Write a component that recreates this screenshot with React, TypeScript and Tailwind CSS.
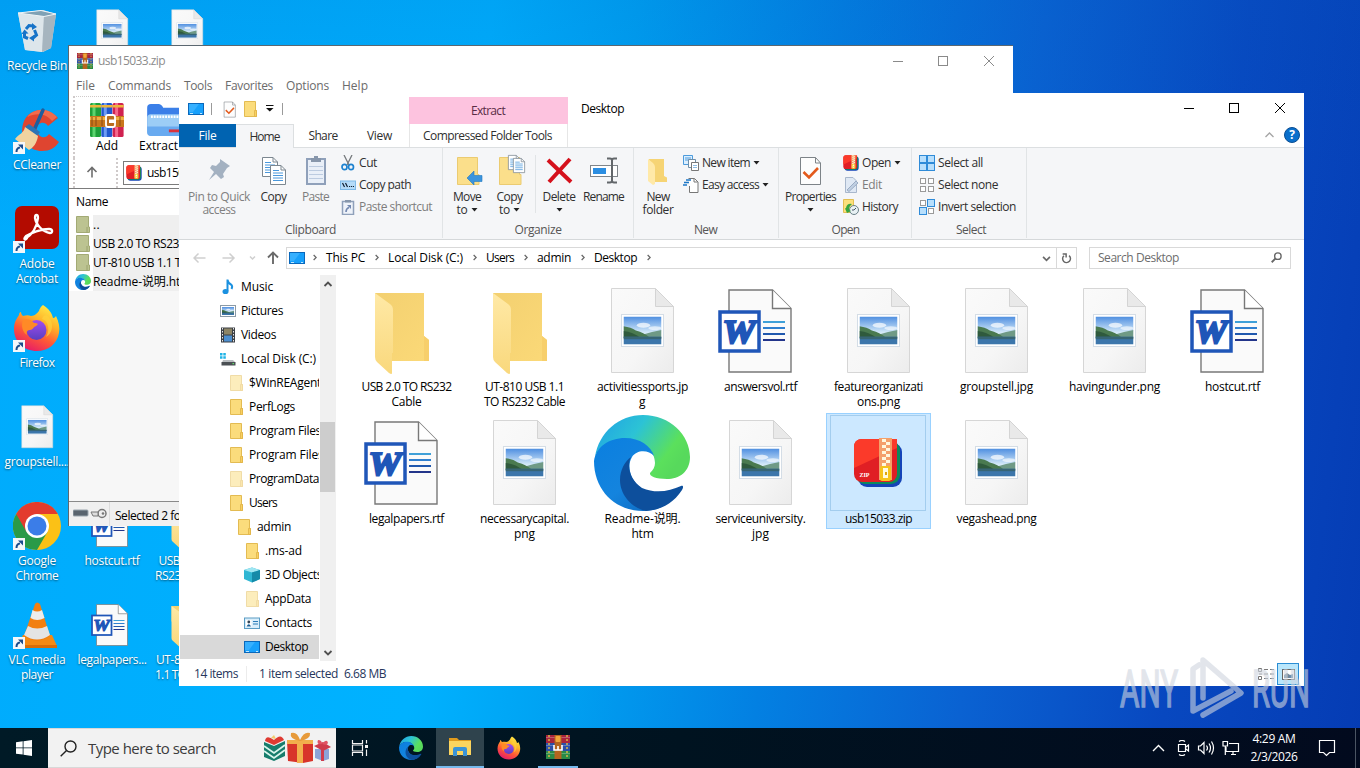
import { useLayoutEffect, useRef, useId, type ReactNode } from "react";

/* Single line of text tracked so that it takes up the given width. */
function T({ w, children, className = "" }: { w: number; children: string; className?: string }) {
  const ref = useRef<HTMLSpanElement>(null);
  useLayoutEffect(() => {
    const el = ref.current;
    if (!el) return;
    el.style.letterSpacing = "0px";
    const natural = el.getBoundingClientRect().width;
    el.style.letterSpacing = `${(w - natural) / children.length}px`;
  }, [w, children]);
  return (
    <span ref={ref} className={`inline-block whitespace-pre ${className}`}>
      {children}
    </span>
  );
}

type Line = [string, number];
type IconProps = { className?: string };

/* ---------- file icons ---------- */

function Landscape({ x, y, w, h }: { x: number; y: number; w: number; h: number }) {
  const id = useId();
  return (
    <svg x={x} y={y} width={w} height={h} viewBox="0 0 40 29" preserveAspectRatio="none">
      <defs>
        <linearGradient id={id} x1="0" y1="0" x2="0" y2="1">
          <stop offset="0" stopColor="#4e8ee0" />
          <stop offset="0.55" stopColor="#cfe6f8" />
          <stop offset="0.7" stopColor="#e6f3fb" />
        </linearGradient>
      </defs>
      <rect width="40" height="29" fill={`url(#${id})`} />
      <ellipse cx="21" cy="9" rx="7" ry="2.6" fill="#fff" opacity=".7" />
      <ellipse cx="33" cy="12" rx="7" ry="2" fill="#fff" opacity=".6" />
      <path d="M16 20 L30 16 L40 14 V22 H14Z" fill="#6f9a86" />
      <path d="M0 10 Q8 11 13 14.500 Q22 17 28 22 H0Z" fill="#4a7a50" />
      <path d="M0 15 Q10 16 18 22 H0Z" fill="#2f5a3d" />
      <rect y="21" width="40" height="8" fill="#3c76ab" />
      <rect y="21" width="40" height="2.500" fill="#376575" />
    </svg>
  );
}

function ImageDoc({ className = "" }: IconProps) {
  const id = useId();
  return (
    <svg viewBox="0 0 96 96" className={className}>
      <defs>
        <linearGradient id={id} x1="0" y1="0" x2="1" y2="1">
          <stop offset="0" stopColor="#fafafa" />
          <stop offset="0.6" stopColor="#f6f6f6" />
          <stop offset="1" stopColor="#ececec" />
        </linearGradient>
      </defs>
      <path d="M17.500 5.500 H61 L79.500 23.500 V89.500 H17.500Z" fill={`url(#${id})`} stroke="#d6d6d6" />
      <path d="M61.500 5.500 V23.500 H79.500Z" fill="#e9e9e9" stroke="#d4d4d4" />
      <rect x="27.500" y="31.500" width="42" height="32" fill="#fff" stroke="#d4dde6" />
      <Landscape x={29.500} y={33.500} w={38} h={28} />
    </svg>
  );
}

function WordDoc({ className = "" }: IconProps) {
  return (
    <svg viewBox="0 0 96 96" className={className}>
      <path d="M17 7 H60.500 L79 25.500 V89 H17Z" fill="#fafafa" stroke="#787878" strokeWidth="1.400" />
      <path d="M60.500 7 V25.500 H79" fill="#fff" stroke="#787878" strokeWidth="1.400" />
      <g strokeWidth="2">
        <path d="M51 39 H73" stroke="#3fa0d8" />
        <path d="M51 45 H73" stroke="#2f80d0" />
        <path d="M51 51 H73" stroke="#2058ae" />
        <path d="M51 57 H73" stroke="#23358a" />
      </g>
      <rect x="8" y="29" width="39" height="39" fill="#fff" stroke="#1f56b8" strokeWidth="3.500" />
      <text x="27" y="60" textAnchor="middle" textLength="33" lengthAdjust="spacingAndGlyphs" fontFamily="Liberation Serif, serif" fontWeight="bold" fontStyle="italic" fontSize="34" fill="#1f56b8" stroke="#1f56b8" strokeWidth="2.200">
        W
      </text>
    </svg>
  );
}

function BigFolder({ className = "" }: IconProps) {
  const id = useId();
  return (
    <svg viewBox="0 0 96 96" className={className}>
      <defs>
        <linearGradient id={id} x1="0" y1="0" x2="1" y2="1">
          <stop offset="0" stopColor="#f3d070" />
          <stop offset="1" stopColor="#fbd978" />
        </linearGradient>
        <linearGradient id={id + "b"} x1="0" y1="0" x2="0" y2="1">
          <stop offset="0" stopColor="#ffe9a6" />
          <stop offset="1" stopColor="#f9d87c" />
        </linearGradient>
      </defs>
      <path d="M17 10 H66 V53 L71 57 V78 H34 L17 40Z" fill={`url(#${id})`} />
      <path d="M66 53 L71 57 V78 H66Z" fill="#f7cf6b" />
      <path d="M17 10 L32 21 Q35 23 35 27 V70 H34 V90 Q34 92 31 90 L19 79 Q17 77 17 74Z" fill={`url(#${id}b)`} />
    </svg>
  );
}

function Edge({ className = "" }: IconProps) {
  const id = useId();
  return (
    <svg viewBox="0 0 96 96" className={className}>
      <defs>
        <linearGradient id={id + "a"} x1="0" y1="0" x2="1" y2=".5">
          <stop offset="0" stopColor="#1f9fe6" />
          <stop offset=".45" stopColor="#2cc3d5" />
          <stop offset=".85" stopColor="#5be05c" />
          <stop offset="1" stopColor="#57d95c" />
        </linearGradient>
        <linearGradient id={id + "b"} x1="0" y1="0" x2="1" y2="1">
          <stop offset="0" stopColor="#0a7fe0" />
          <stop offset=".5" stopColor="#1484de" />
          <stop offset="1" stopColor="#0b5fb4" />
        </linearGradient>
      </defs>
      <path d="M1 42 C5 17 25 0 49 0 C76 0 96 20 96 42 C96 57 85 64 73 64 C62 64 55 61 56 58 C59 55 61 52 61 48 C61 36 49 24 31 24 C16 24 5 32 1 42Z" fill={`url(#${id}a)`} />
      <path d="M0 46 C2 32 15 23 31 23 C46 23 57 31 60 41 C55 35 43 34 38 42 C32 52 37 68 50 75 C64 81 78 78 88 72 C80 87 66 96 49 96 C22 96 0 76 0 46Z" fill={`url(#${id}b)`} />
      <path d="M37 42 C32 52 37 66 48 73 C62 79 76 76 87 71 C89 70 90 72 88 75 C79 89 66 95 52 96 C38 93 26 80 26 65 C26 55 31 46 37 42Z" fill="#0d4f9c" />
    </svg>
  );
}

function ZipFile({ className = "", label = true }: IconProps & { label?: boolean }) {
  return (
    <svg viewBox="0 0 50 50" className={className}>
      <rect x="5" y="5" width="44" height="44" rx="9" fill="#1544b8" />
      <rect x="3" y="3" width="44" height="43" rx="9" fill="#0d8a5c" />
      <rect x="1" y="1" width="43" height="43" rx="8" fill="#e01f24" />
      <path d="M9 1 H44 V10 L1 30 V9 Q1 1 9 1Z" fill="#fb3a2a" />
      <rect x="26" y="0" width="13" height="42" fill="#f4a06a" />
      <path d="M29 1h4v3h-4z M33 4h4v3h-4z M29 7h4v3h-4z M33 10h4v3h-4z M29 13h4v3h-4z M33 16h4v3h-4z M29 19h4v3h-4z M33 22h4v3h-4z M29 25h4v3h-4z" fill="#fff8dc" />
      <rect x="27" y="28" width="11" height="15" rx="2" fill="#f6c31c" />
      <path d="M30 30h5v10h-5z" fill="#fffbe2" />
      <path d="M32 34h2v3h-2z" fill="#e0a710" />
      {label && (
        <text x="6.500" y="38.500" fontFamily="Liberation Serif, serif" fontWeight="bold" fontSize="6" fill="#fff">
          ZIP
        </text>
      )}
    </svg>
  );
}

/* ---------- application icons ---------- */

function Books({ className = "" }: IconProps) {
  const cols = [
    ["#1f9f3a", "#5cd46e"],
    ["#2158cf", "#6d9cf4"],
    ["#d02250", "#f4688c"],
  ];
  return (
    <svg viewBox="0 0 34 34" className={className}>
      {cols.map(([a, b], i) => (
        <g key={a}>
          <rect x={i * 11.300} y="0" width="11" height="34" rx="1.500" fill={a} />
          <rect x={i * 11.300 + 2.500} y="0" width="3" height="34" fill={b} />
          <rect x={i * 11.300} y="2" width="11" height="2.500" fill="#edb53b" />
        </g>
      ))}
      <rect x="0" y="13" width="34" height="11" fill="#c9761c" />
      <rect x="0" y="14" width="34" height="3" fill="#f0b043" />
      <path d="M2 14v9 M6 14v9 M12 14v9 M30 14v9" stroke="#8a4a12" />
      <rect x="16" y="12" width="9" height="12" rx="2" fill="#b96d1f" stroke="#fff" strokeWidth="1.800" />
      <rect x="19" y="16.500" width="7" height="3.500" fill="#fff" />
    </svg>
  );
}

function WinRar({ className = "" }: IconProps) {
  return (
    <svg viewBox="0 0 24 24" className={className}>
      <rect width="24" height="8" fill="#a8243c" />
      <rect y="8" width="24" height="8" fill="#2c4fa8" />
      <rect y="16" width="24" height="8" fill="#2a8a46" />
      <path d="M0 2.500H24 M0 10.500H24 M0 18.500H24" stroke="#fff" strokeOpacity=".25" strokeWidth="1.200" />
      <path d="M3 0V24 M21 0V24" stroke="#d9b545" strokeWidth="1.500" strokeDasharray="2 2" />
      <rect x="8.500" y="0" width="7" height="24" fill="#b4641e" />
      <rect x="9.500" y="1" width="5" height="6" rx="1" fill="#f2a43a" />
      <path d="M8 10V15H16V10 M12 11V15" fill="none" stroke="#fff" strokeWidth="1.600" />
    </svg>
  );
}

function Firefox({ className = "" }: IconProps) {
  const id = useId();
  return (
    <svg viewBox="0 0 48 48" className={className}>
      <defs>
        <linearGradient id={id} x1=".8" y1="0" x2=".3" y2="1">
          <stop offset="0" stopColor="#fff04a" />
          <stop offset=".35" stopColor="#ffb429" />
          <stop offset=".65" stopColor="#ff5b35" />
          <stop offset="1" stopColor="#e5196a" />
        </linearGradient>
        <linearGradient id={id + "p"} x1="0" y1="0" x2="0" y2="1">
          <stop offset="0" stopColor="#a34cf0" />
          <stop offset="1" stopColor="#5a3fc0" />
        </linearGradient>
      </defs>
      <path d="M30 1 C36 5 39 9 40 14 C42 14 43 12 43 12 C46 18 47 24 46 29 C44 40 35 47 24 47 C11 47 1 38 1 25 C1 18 4 14 6 11 C6 9 7 8 8 8 C8 10 9 11 10 12 C13 11 16 11 18 12 C22 12 24 9 26 7 C27 3 30 1 30 1Z" fill={`url(#${id})`} />
      <circle cx="23.500" cy="26" r="10" fill={`url(#${id}p)`} />
      <path d="M10 16 C14 14 19 16 21 19 C25 19 26 20 23 22 C20 23 20 26 17 26 C15 26 13 27 14 31 C9 28 8 21 10 16Z" fill="#ff8a26" />
      <path d="M29 15 C36 17 37 27 33 33 C39 30 41 21 37 15 C35 11 31 9 29 15Z" fill="#ffd23c" opacity=".7" />
    </svg>
  );
}

function Chrome({ className = "" }: IconProps) {
  return (
    <svg viewBox="0 0 48 48" className={className}>
      <circle cx="24" cy="24" r="24" fill="#fbc116" />
      <path d="M24 24 L3.200 12 A24 24 0 0 0 24 48 L34.400 30Z" fill="#2a9a48" />
      <path d="M3.200 12 A24 24 0 0 1 44.800 12 H24 L13.600 30Z" fill="#e33b2e" />
      <circle cx="24" cy="24" r="12" fill="#fff" />
      <circle cx="24" cy="24" r="9.500" fill="#3b7de8" />
    </svg>
  );
}

function Vlc({ className = "" }: IconProps) {
  return (
    <svg viewBox="0 0 48 48" className={className}>
      <path d="M10 34 H39 L44 45 Q44 47 42 47 H7 Q5 47 5 45Z" fill="#f48a14" />
      <path d="M5 44h39v3h-39z" fill="#d96d08" />
      <path d="M22 3 Q24 0 27 3 L37 35 Q24 44 11 35Z" fill="#f27f10" />
      <path d="M19.500 9 Q24 12 29 9 L31.500 17 Q24 21 17.500 17Z" fill="#ededed" />
      <path d="M15 25 Q24 30 34 25 L37 34 Q24 43 11 34Z" fill="#e4e4e4" />
    </svg>
  );
}

function Acrobat({ className = "" }: IconProps) {
  return (
    <svg viewBox="0 0 48 48" className={className}>
      <rect x="2" y="1" width="44" height="43" rx="7" fill="#b30b00" />
      <path d="M13 33 C19 30 24 22 25 13 C25 9 22 9 22 13 C23 20 30 27 37 28 C40 28 40 24 36 24 C28 24 18 28 13 31 C10 34 12 36 14 33Z" fill="none" stroke="#fff" strokeWidth="2.300" strokeLinejoin="round" />
    </svg>
  );
}

function CCleaner({ className = "" }: IconProps) {
  return (
    <svg viewBox="0 0 48 48" className={className}>
      <path d="M45 12 C34 -1 16 3 11 15 C5 30 14 45 29 45 C37 45 42 42 46 36 L36 28 C32 34 25 31 24 25 C23 17 31 14 35 20Z" fill="#df4530" />
      <path d="M44 11 C34 0 20 3 14 11 C24 6 34 8 39 15Z" fill="#f26b4c" />
      <path d="M30 4 L22 22" stroke="#1d5e9e" strokeWidth="3.500" strokeLinecap="round" />
      <path d="M16 18 L27 26 L24 30 L12 21Z" fill="#2d74b5" />
      <path d="M12 21 L25 30 C24 37 20 42 16 44 L2 33 C6 28 11 27 12 21Z" fill="#f0d3a0" />
    </svg>
  );
}

function RecycleBin({ className = "" }: IconProps) {
  return (
    <svg viewBox="0 0 48 48" className={className}>
      <path d="M5 6 L30 3 L43 7 L38 41 L30 45 L12 43Z" fill="#cdd9e0" />
      <path d="M5 6 L31 9 L29 45 L12 43Z" fill="#dde6eb" />
      <path d="M31 9 L43 7 L38 41 L29 45Z" fill="#a6b5bf" />
      <path d="M5 6 L28 3.500 L43 7 L31 9.500Z" fill="#7fa1b5" stroke="#eef4f7" />
      <g fill="none" stroke="#1673c8" strokeWidth="3">
        <path d="M13 22 L16 18.500 L20 19" />
        <path d="M21.500 23 L23.500 28 L20 31" />
        <path d="M15 31.500 L11.500 30 L11.500 25.500" />
      </g>
      <path d="M19 16l5 4-5 3z M21 28v6.500l-5-3.500z M8.500 27l3-4.500 4 4z" fill="#1673c8" />
    </svg>
  );
}

function ShortcutBadge() {
  return (
    <svg viewBox="0 0 12 12" className="absolute bottom-0 left-0 size-3">
      <rect width="12" height="12" fill="#f4f7fa" />
      <path d="M3.500 10 Q3.500 6 7 5.500" fill="none" stroke="#1c4d8c" strokeWidth="2" />
      <path d="M5 2.500h5v5z" fill="#1c4d8c" />
    </svg>
  );
}

/* ---------- small icons ---------- */

function Folder16({ pale = false, className = "" }: IconProps & { pale?: boolean }) {
  return (
    <svg viewBox="-1 0 16 16" className={`size-4 shrink-0 ${pale ? "opacity-50" : ""} ${className}`}>
      <path d="M1.500 .500H12.500V9.500H13.500V15.500H1.500Z" fill="#fbdc7c" stroke="#e3bb52" />
      <path d="M11.500 9.500h2v6h-2z" fill="#f8d060" stroke="#dfb347" strokeWidth=".8" />
    </svg>
  );
}

function Monitor({ className = "" }: IconProps) {
  return (
    <svg viewBox="0 0 16 12" className={`shrink-0 ${className}`}>
      <rect x=".5" y=".5" width="15" height="11" fill="#17a0fb" stroke="#0a68bb" />
      <path d="M1 1H11L5 9H1Z" fill="#36b0ff" />
      <path d="M2 10.500H5 M12 10.500H14" stroke="#bfe6ff" />
    </svg>
  );
}

function Tri() {
  return (
    <svg viewBox="0 0 7 4" className="h-[4px] w-[7px] shrink-0">
      <path d="M.5 0H6.500L3.500 3.500Z" fill="#222" />
    </svg>
  );
}

function PinIcon() {
  return (
    <svg viewBox="0 0 32 32" className="size-8">
      <path d="M17 4 L27 11 L24 13 L20 19 L21 22 L18 24 L13 19 L6 25 L11 17 L7 13 L9 10 L13 11 L17 7Z" transform="translate(0 1)" fill="#a3b1c1" />
    </svg>
  );
}

function Sheet({ x, y, s = 1 }: { x: number; y: number; s?: number }) {
  return (
    <g transform={`translate(${x} ${y}) scale(${s})`}>
      <path d="M.5 .5H11L15.500 5V19.500H.5Z" fill="#fff" stroke="#7c8790" />
      <path d="M11 .5V5H15.500" fill="none" stroke="#7c8790" />
      <path d="M3 5.500h6M3 8h10M3 10.500h10M3 13h10M3 15.500h10" stroke="#4a98dc" />
    </g>
  );
}

function CopyIcon() {
  return (
    <svg viewBox="0 0 32 32" className="size-8">
      <Sheet x={4} y={3} />
      <Sheet x={12} y={11} />
    </svg>
  );
}

function PasteIcon({ className = "size-8" }: IconProps) {
  return (
    <svg viewBox="0 0 32 32" className={className}>
      <rect x="7" y="5" width="18" height="25" fill="#e9eff8" stroke="#8fa0ba" strokeWidth="2" />
      <path d="M11 4h10v4h-10z M14 2h4v3h-4z" fill="#8796ab" />
      <path d="M9 12.500h14M9 16.500h14M9 20.500h14M9 24.500h14" stroke="#bccbe0" />
    </svg>
  );
}

function CutIcon() {
  return (
    <svg viewBox="0 0 16 16" className="size-4">
      <path d="M4 0 L9 10 M12 0 L7 10" stroke="#75797d" strokeWidth="1.300" />
      <ellipse cx="4.500" cy="12" rx="2.500" ry="2.700" fill="none" stroke="#1e82cf" strokeWidth="1.700" />
      <ellipse cx="11" cy="12" rx="2.500" ry="2.700" fill="none" stroke="#1e82cf" strokeWidth="1.700" />
    </svg>
  );
}

function CopyPathIcon() {
  return (
    <svg viewBox="0 0 16 16" className="size-4">
      <rect x=".5" y="4" width="15" height="8.500" fill="#b5dbf8" stroke="#7ebae8" />
      <path d="M2.500 6l2 4M5.500 6l2 4M9 9.500h1.200M11 9.500h1.200M13 9.500h1" stroke="#123" strokeWidth="1.200" />
    </svg>
  );
}

function PasteShortcutIcon() {
  return (
    <svg viewBox="0 0 16 16" className="size-4">
      <rect x="2.500" y="2.500" width="11" height="13" fill="#eef2f9" stroke="#8fa0ba" strokeWidth="1.500" />
      <path d="M5 1h6v2.500H5z" fill="#8796ab" />
      <path d="M6 13Q6 9.500 9 8.500" fill="none" stroke="#7388b0" strokeWidth="1.600" />
      <path d="M7 6h4v4z" fill="#7388b0" />
    </svg>
  );
}

function MoveIcon() {
  return (
    <svg viewBox="0 0 32 32" className="size-8">
      <path d="M6.500 3.500H26.500V20.500H28V30.500H6.500Z" fill="#fbdf8b" stroke="#ebcb71" />
      <path d="M16 24 L23 17V21.500H31V27.500H23V31Z" fill="#3b94dd" stroke="#2278bf" strokeWidth=".6" />
    </svg>
  );
}

function CopyToIcon() {
  return (
    <svg viewBox="0 0 32 32" className="size-8">
      <path d="M5.500 3.500H25.500V20.500H27V30.500H5.500Z" fill="#fbdf8b" stroke="#ebcb71" />
      <Sheet x={14} y={1} s={0.75} />
      <Sheet x={19} y={4} s={0.75} />
    </svg>
  );
}

function DeleteIcon() {
  return (
    <svg viewBox="0 0 32 32" className="size-8">
      <path d="M5 6 L28 28 M27 5 L6 28" stroke="#d5111c" strokeWidth="4" />
    </svg>
  );
}

function RenameIcon() {
  return (
    <svg viewBox="0 0 32 32" className="size-8">
      <rect x="2.500" y="11.500" width="27" height="11" fill="#fff" stroke="#80858a" />
      <rect x="5" y="14" width="13" height="6" fill="#2c8ee2" />
      <path d="M19 4.500H22Q24 4.500 24 6.500Q24 4.500 26 4.500H29 M24 6V27 M19 28.500H22Q24 28.500 24 26.500Q24 28.500 26 28.500H29" fill="none" stroke="#63676b" strokeWidth="2" />
    </svg>
  );
}

function NewFolderIcon() {
  return (
    <svg viewBox="0 0 32 32" className="size-8">
      <path d="M7 5H22V22L25 23.500V28H10Z" fill="#f6d474" />
      <path d="M6 5 L11 9Q13 11 13 13V30 L11 31 L6 27Z" fill="#ffe9a8" />
    </svg>
  );
}

function PropertiesIcon({ className = "size-8" }: IconProps) {
  return (
    <svg viewBox="0 0 32 32" className={className}>
      <path d="M5.500 3.500H20.500L25.500 9V30.500H5.500Z" fill="#fdfdfd" stroke="#7d8388" />
      <path d="M20.500 3.500V9H25.500" fill="none" stroke="#7d8388" />
      <path d="M8.500 18 L14 23.500 L23 14" fill="none" stroke="#e35a1c" strokeWidth="2.600" />
    </svg>
  );
}

function NewItemIcon() {
  return (
    <svg viewBox="0 0 16 16" className="size-4">
      <path d="M.5 .5h9v9h-9z" fill="#dcefff" stroke="#4c9bdc" />
      <path d="M2 3h6M2 5h6" stroke="#4c9bdc" />
      <path d="M5.500 4.500h7v8h-7z" fill="#fff" stroke="#6f8ea8" />
      <path d="M8.500 7.500h7v8h-7z" fill="#fff" stroke="#777" />
      <path d="M10 10.500h4M10 12.500h4" stroke="#8dbbe2" />
    </svg>
  );
}

function EasyAccessIcon() {
  return (
    <svg viewBox="0 0 16 16" className="size-4">
      <path d="M5.500 1.500h6L15 5v10.500H6.500V9" fill="#fff" stroke="#777" />
      <path d="M11 1.500V5h3.500" fill="none" stroke="#777" />
      <path d="M3 3h5M1 5.500h5M0 8h4" stroke="#1d77c6" strokeWidth="1.400" />
    </svg>
  );
}

function EditIcon() {
  return (
    <svg viewBox="0 0 16 16" className="size-4">
      <path d="M2.500 .5H10L13.500 4V15.500H2.500Z" fill="#dfe8f4" stroke="#a8b7cc" />
      <path d="M4 13 L13 4 L15 6 L6 14.500Z" fill="#c0cfe2" stroke="#9bacc4" />
    </svg>
  );
}

function HistoryIcon() {
  return (
    <svg viewBox="0 0 16 16" className="size-4">
      <path d="M.5 .5H10.500V13.500H.5Z" fill="#fbe07c" stroke="#e3bf52" />
      <circle cx="11" cy="11" r="4.500" fill="#e8f1f4" stroke="#6a8089" />
      <path d="M11 11 L13 9 M11 11H9" stroke="#456" />
      <path d="M3 9 Q4 4 9 5 Q6 7 6 11 L8 12 L4 14 L2 9.500Z" fill="#36a53f" />
    </svg>
  );
}

function SelectIcon({ kind }: { kind: "all" | "none" | "invert" }) {
  const on = (i: number) => kind === "all" || (kind === "invert" && (i === 1 || i === 2));
  return (
    <svg viewBox="0 0 16 16" className="size-4">
      {[0, 1, 2, 3].map((i) => {
        const x = (i % 2) * 8;
        const y = Math.floor(i / 2) * 8;
        return on(i) ? (
          <rect key={i} x={x + 0.5} y={y + 0.5} width="7" height="7" fill="#b8dffc" stroke="#2f8bd8" />
        ) : (
          <rect key={i} x={x + 1.5} y={y + 1.500} width="5" height="5" fill="#fff" stroke="#9a9a9a" />
        );
      })}
    </svg>
  );
}

/* ---------- desktop ---------- */

function DesktopItem({ icon, lines, shortcut }: { icon: ReactNode; lines: Line[]; shortcut?: boolean }) {
  return (
    <div className="flex h-[99px] w-[74px] shrink-0 flex-col items-center pt-[7px]">
      <div className="relative size-12">
        {icon}
        {shortcut && <ShortcutBadge />}
      </div>
      <div className="mt-[3px] flex flex-col items-center leading-[15px] text-white [text-shadow:0_1px_2px_rgba(0,0,0,0.55)]">
        {lines.map(([t, w]) => (
          <T key={t} w={w}>
            {t}
          </T>
        ))}
      </div>
    </div>
  );
}

function Desktop() {
  const s = "size-12";
  return (
    <div className="flex h-[728px] overflow-hidden">
      <div className="flex w-[75px] flex-col">
        <DesktopItem icon={<RecycleBin className={s} />} lines={[["Recycle Bin", 60]]} />
        <DesktopItem shortcut icon={<CCleaner className={s} />} lines={[["CCleaner", 48]]} />
        <DesktopItem shortcut icon={<Acrobat className={s} />} lines={[["Adobe", 35], ["Acrobat", 42]]} />
        <DesktopItem shortcut icon={<Firefox className={s} />} lines={[["Firefox", 35]]} />
        <DesktopItem icon={<ImageDoc className={s} />} lines={[["groupstell....", 65]]} />
        <DesktopItem shortcut icon={<Chrome className={s} />} lines={[["Google", 38], ["Chrome", 43]]} />
        <DesktopItem shortcut icon={<Vlc className={s} />} lines={[["VLC media", 57], ["player", 32]]} />
      </div>
      <div className="flex w-[75px] flex-col justify-between pb-[35px]">
        <DesktopItem icon={<ImageDoc className={s} />} lines={[]} />
        <div>
          <DesktopItem icon={<WordDoc className={s} />} lines={[["hostcut.rtf", 55]]} />
          <DesktopItem icon={<WordDoc className={s} />} lines={[["legalpapers...", 69]]} />
        </div>
      </div>
      <div className="flex w-[75px] flex-col justify-between pb-[35px]">
        <DesktopItem icon={<ImageDoc className={s} />} lines={[]} />
        <div>
          <DesktopItem icon={<BigFolder className={s} />} lines={[["USB 2.0 TO", 57], ["RS232 Cable", 64]]} />
          <DesktopItem icon={<BigFolder className={s} />} lines={[["UT-810 USB", 62], ["1.1 TO RS232", 64]]} />
        </div>
      </div>
    </div>
  );
}

function WindowButtons({ color }: { color: string }) {
  return (
    <svg viewBox="0 0 138 30" className="h-[30px] w-[138px] shrink-0" fill="none" stroke={color} shapeRendering="crispEdges">
      <path d="M18 15.500H28" />
      <rect x="63.500" y="10.500" width="9" height="9" />
      <path d="M109 10 L119 20 M119 10 L109 20" shapeRendering="auto" />
    </svg>
  );
}

function ArchiveWindow() {
  const rows: [string, number][] = [
    ["..", 7],
    ["USB 2.0 TO RS232 Cable", 124],
    ["UT-810 USB 1.1 TO RS232 Cable", 163],
  ];
  return (
    <section className="absolute left-[68px] top-[45px] flex h-[481px] w-[945px] flex-col border-l border-t border-[#5b6770] bg-white">
      <header className="flex h-[30px] items-center pl-2 text-[#8c8c8c]">
        <WinRar className="size-4" />
        <T w={67} className="ml-[5px]">usb15033.zip</T>
        <div className="ml-auto mb-px">
          <WindowButtons color="#8a8a8a" />
        </div>
      </header>
      <nav className="flex h-5 items-center gap-[13px] pl-[7px] text-[#6b6b6b]">
        <T w={19}>File</T>
        <T w={63}>Commands</T>
        <T w={28}>Tools</T>
        <T w={48}>Favorites</T>
        <T w={43}>Options</T>
        <T w={26}>Help</T>
      </nav>
      <div className="ml-1 flex h-[62px] border-l-2 border-t border-dotted border-[#cfcaca] pl-[15px] pt-[6px]">
        <div className="flex w-[34px] flex-col items-center">
          <Books className="size-[34px]" />
          <T w={22} className="mt-[1px] leading-[16px]">Add</T>
        </div>
        <div className="ml-[15px] flex w-[56px] flex-col items-center">
          <svg viewBox="0 0 44 36" className="h-[34px] w-[44px]">
            <path d="M1 5Q1 1 5 1H13Q16 1 18 5H40Q43 5 43 9V31H1Z" fill="#3b7fe8" />
            <path d="M5 12H43V35H5Q1 35 1 30V16Q1 12 5 12Z" fill="#9ccdf6" />
            <path d="M5 14.500H42" stroke="#fff" strokeWidth="2.500" strokeDasharray="2 1" />
            <path d="M1 25H43V31Q43 35 39 35H5Q1 35 1 31Z" fill="#68aaf0" />
            <rect x="24" y="28" width="14" height="3" fill="#d8323c" />
          </svg>
          <T w={56} className="mt-[1px] leading-[16px]">Extract To</T>
        </div>
      </div>
      <div className="ml-1 flex h-[30px] border-l-2 border-dotted border-[#cfcaca]">
        <div className="flex w-[43px] items-center justify-center border-r-2 border-dotted border-[#cfcaca] pb-[3px] pr-2">
          <svg viewBox="0 0 12 12" className="size-[12px]" fill="none" stroke="#6e6e6e" strokeWidth="1.600">
            <path d="M6 11.500V1.500 M1.500 6L6 1.500L10.500 6" />
          </svg>
        </div>
        <div className="ml-[5px] mt-[3px] flex h-[24px] flex-1 items-center border border-[#7b7b7b] pl-[2px]">
          <ZipFile label={false} className="size-4" />
          <T w={67} className="ml-[5px]">usb15033.zip</T>
        </div>
      </div>
      <div className="flex-1 overflow-hidden border-t border-[#7c7c7c] bg-[#f7f7f7]">
        <div className="flex h-[26px] items-center bg-white pl-[7px]">
          <T w={32}>Name</T>
        </div>
        {rows.map(([t, w]) => (
          <div key={t} className="flex h-[19px] items-center bg-white pl-[7px]">
            <svg viewBox="0 0 14 17" className="h-[17px] w-[14px] shrink-0">
              <path d="M.5 .5H12.500V11H13.500V16.500H.5Z" fill="#bcc391" stroke="#a3aa75" />
              <path d="M11 11v5.500" stroke="#9aa26c" />
            </svg>
            <div className="ml-[3px] flex h-full flex-1 items-center bg-[#efefef]">
              <T w={w}>{t}</T>
            </div>
          </div>
        ))}
        <div className="flex h-[19px] items-center bg-white">
          <Edge className="ml-[6px] size-4 shrink-0" />
          <div className="ml-[2px] flex h-full flex-1 items-center bg-[#efefef]">
            <T w={98}>Readme-说明.htm</T>
          </div>
        </div>
      </div>
      <footer className="flex h-[25px] items-center border-t border-[#8a8a8a] bg-[#f0f0f0] pl-1">
        <svg viewBox="0 0 34 12" className="h-3 w-[34px]">
          <rect x="0" y="2" width="15" height="6" rx="1" fill="#59646e" stroke="#9aa5ad" />
          <circle cx="29" cy="5.500" r="4" fill="#eee" stroke="#777" strokeWidth="1.500" />
          <circle cx="30" cy="5.500" r="1.300" fill="#777" />
          <path d="M18 4H25V8H20Z" fill="#ddd" stroke="#777" />
        </svg>
        <div className="ml-[2px] flex h-full items-center border-l border-[#dcdcdc] pl-[5px] pt-[3px]">
          <T w={91}>Selected 2 folders</T>
        </div>
      </footer>
    </section>
  );
}

/* ---------- explorer ---------- */

function BigButton({ icon, lines, className, arrow }: { icon: ReactNode; lines: Line[]; className: string; arrow?: "inline" | "below" }) {
  return (
    <div className={`flex flex-col items-center pt-[6px] ${className}`}>
      {icon}
      <div className="mt-[4px] flex flex-col items-center leading-[13px]">
        {lines.map(([t, w], i) => (
          <span key={t} className="flex items-center gap-[3px]">
            <T w={w}>{t}</T>
            {arrow === "inline" && i === lines.length - 1 && <Tri />}
          </span>
        ))}
        {arrow === "below" && (
          <span className="mt-[5px]">
            <Tri />
          </span>
        )}
      </div>
    </div>
  );
}

function SmallButton({ icon, text, w, arrow, muted }: { icon: ReactNode; text: string; w: number; arrow?: boolean; muted?: boolean }) {
  return (
    <div className={`flex h-[22px] items-center ${muted ? "text-[#7d7d7d]" : ""}`}>
      {icon}
      <T w={w} className="ml-[3px] leading-[16px]">{text}</T>
      {arrow && (
        <span className="ml-[3px] flex">
          <Tri />
        </span>
      )}
    </div>
  );
}

function Group({ label, w, className, children }: { label: string; w: number; className: string; children: ReactNode }) {
  return (
    <div className={`flex h-[90px] shrink-0 flex-col border-r border-[#e1e4e6] ${className}`}>
      <div className="flex h-[74px]">{children}</div>
      <div className="flex justify-center pr-[3px] leading-[16px] text-[#555]">
        <T w={w}>{label}</T>
      </div>
    </div>
  );
}

function Ribbon() {
  return (
    <div className="flex h-[92px] border-b border-[#d5d8da] bg-[#f5f6f8] text-[#2f2f2f]">
      <Group label="Clipboard" w={51} className="w-[264px] pl-[3px]">
        <BigButton className="w-[74px] text-[#808080]" icon={<PinIcon />} lines={[["Pin to Quick", 62], ["access", 33]]} />
        <BigButton className="w-[35px]" icon={<CopyIcon />} lines={[["Copy", 26]]} />
        <BigButton className="w-[49px] text-[#7d7d7d]" icon={<PasteIcon />} lines={[["Paste", 27]]} />
        <div className="pt-[4px]">
          <SmallButton icon={<CutIcon />} text="Cut" w={18} />
          <SmallButton icon={<CopyPathIcon />} text="Copy path" w={52} />
          <SmallButton muted icon={<PasteShortcutIcon />} text="Paste shortcut" w={73} />
        </div>
      </Group>
      <Group label="Organize" w={47} className="w-[191px] pl-[3px]">
        <BigButton className="w-[42px]" icon={<MoveIcon />} arrow="inline" lines={[["Move", 28], ["to", 11]]} />
        <BigButton className="w-[43px]" icon={<CopyToIcon />} arrow="inline" lines={[["Copy", 26], ["to", 11]]} />
        <div className="ml-1 mt-[7px] h-[58px] w-px bg-[#e1e4e6]" />
        <BigButton className="w-[46px]" icon={<DeleteIcon />} arrow="below" lines={[["Delete", 33]]} />
        <BigButton className="w-[43px]" icon={<RenameIcon />} lines={[["Rename", 41]]} />
      </Group>
      <Group label="New" w={23} className="w-[145px] pl-[2px]">
        <BigButton className="w-[44px]" icon={<NewFolderIcon />} lines={[["New", 23], ["folder", 31]]} />
        <div className="pl-[3px] pt-[4px]">
          <SmallButton arrow icon={<NewItemIcon />} text="New item" w={48} />
          <SmallButton arrow icon={<EasyAccessIcon />} text="Easy access" w={57} />
        </div>
      </Group>
      <Group label="Open" w={28} className="w-[133px] pl-[4px]">
        <BigButton className="w-[55px]" icon={<PropertiesIcon />} arrow="below" lines={[["Properties", 51]]} />
        <div className="pl-[5px] pt-[4px]">
          <SmallButton arrow icon={<ZipFile label={false} className="size-4" />} text="Open" w={29} />
          <SmallButton muted icon={<EditIcon />} text="Edit" w={20} />
          <SmallButton icon={<HistoryIcon />} text="History" w={36} />
        </div>
      </Group>
      <Group label="Select" w={30} className="w-[115px] pl-[7px]">
        <div className="pt-[4px]">
          <SmallButton icon={<SelectIcon kind="all" />} text="Select all" w={45} />
          <SmallButton icon={<SelectIcon kind="none" />} text="Select none" w={60} />
          <SmallButton icon={<SelectIcon kind="invert" />} text="Invert selection" w={78} />
        </div>
      </Group>
    </div>
  );
}

function TitleArea() {
  return (
    <div className="flex h-[54px] shrink-0">
      <div className="flex flex-col">
        <div className="flex h-[31px] items-center pl-[9px]">
          <Monitor className="h-3 w-4" />
          <span className="ml-[7px] h-3 w-px bg-[#9a9a9a]" />
          <PropertiesIcon className="ml-[9px] size-[18px]" />
          <Folder16 className="ml-[3px]" />
          <svg viewBox="0 0 8 7" className="ml-[8px] h-[7px] w-2">
            <path d="M0 .5H7.500" stroke="#111" />
            <path d="M0 3H7.500L3.750 6.500Z" fill="#111" />
          </svg>
          <span className="ml-2 h-3 w-px bg-[#9a9a9a]" />
        </div>
        <div className="flex h-[23px] text-[#2f2f2f]">
          <div className="flex w-[57px] items-center justify-center bg-[#0063b1] text-white">
            <T w={18}>File</T>
          </div>
          <div className="z-10 mb-[-1px] flex w-[58px] items-center justify-center border-r border-t border-[#dcdfe1] bg-[#f5f6f8]">
            <T w={30}>Home</T>
          </div>
          <div className="flex w-[58px] items-center justify-center">
            <T w={29}>Share</T>
          </div>
          <div className="flex w-[55px] items-center justify-center">
            <T w={25}>View</T>
          </div>
        </div>
      </div>
      <div className="ml-[2px] mt-1 flex w-[159px] flex-col">
        <div className="flex h-[27px] items-center justify-center bg-[#fdc3df] pr-px text-[#5a2c45]">
          <T w={34}>Extract</T>
        </div>
        <div className="flex h-[23px] items-center justify-center border-x border-[#e6e6e6] pr-[2px] text-[#2f2f2f]">
          <T w={129}>Compressed Folder Tools</T>
        </div>
      </div>
      <div className="ml-[13px] flex h-[31px] items-center">
        <T w={43}>Desktop</T>
      </div>
      <div className="ml-auto flex flex-col items-end">
        <WindowButtons color="#000" />
        <div className="flex items-center gap-[10px] pr-1 pt-1">
          <svg viewBox="0 0 9 6" className="h-[6px] w-[9px]" fill="none" stroke="#a5a5a5" strokeWidth="1.300">
            <path d="M.5 5L4.500 1L8.500 5" />
          </svg>
          <div className="flex size-4 items-center justify-center rounded-full border border-[#0a4d92] bg-[#0a6fcb] text-[12px] font-bold leading-none text-white">?</div>
        </div>
      </div>
    </div>
  );
}

function Chevron() {
  return (
    <span className="flex w-[23px] justify-center">
      <svg viewBox="0 0 5 8" className="h-[7px] w-[4px]" fill="none" stroke="#666" strokeWidth="1.600">
        <path d="M.8 .8L4 4L.8 7.200" />
      </svg>
    </span>
  );
}

function AddressRow() {
  const crumbs: Line[] = [["This PC", 39], ["Local Disk (C:)", 75], ["Users", 28], ["admin", 34], ["Desktop", 43]];
  return (
    <div className="flex h-[35px] shrink-0 items-center pr-[13px]">
      <svg viewBox="0 0 90 16" className="ml-[14px] h-4 w-[90px]" fill="none" strokeWidth="1.500">
        <path d="M5.500 3.500L1 8L5.500 12.500 M1 8H12.500" stroke="#cfcfcf" />
        <path d="M36.500 3.500L41 8L36.500 12.500 M41 8H29.500" stroke="#cfcfcf" />
        <path d="M57 6.500L59.500 9L62 6.500" stroke="#cfcfcf" />
        <path d="M80 14V3 M75 7.500L80 2.500L85 7.500" stroke="#6a6a6a" strokeWidth="1.900" />
      </svg>
      <div className="ml-[3px] flex h-[22px] w-[791px] border border-[#d9d9d9]">
        <div className="flex flex-1 items-center pl-[2px]">
          <Monitor className="mr-[-2px] h-3 w-4" />
          {crumbs.map(([t, w]) => (
            <span key={t} className="flex items-center">
              <Chevron />
              <T w={w}>{t}</T>
            </span>
          ))}
          <Chevron />
        </div>
        <div className="flex w-5 items-center justify-center border-r border-[#d9d9d9]">
          <svg viewBox="0 0 10 7" className="mt-[2px] h-[6px] w-[9px]" fill="none" stroke="#6a6a6a" strokeWidth="2">
            <path d="M1 1L5 5L9 1" />
          </svg>
        </div>
        <div className="flex w-[19px] items-center justify-center">
          <svg viewBox="0 0 12 12" className="mt-px size-[11px]" fill="none" stroke="#666" strokeWidth="1.600">
            <path d="M8.800 2.900A4.300 4.300 0 1 1 3.200 3" />
            <path d="M1.800 1.200H5.600V5" />
          </svg>
        </div>
      </div>
      <div className="ml-3 flex h-[22px] flex-1 items-center justify-between border border-[#d9d9d9] pl-2 pr-2 text-[#6d6d6d]">
        <T w={81}>Search Desktop</T>
        <svg viewBox="0 0 12 12" className="size-[11px]" fill="none" stroke="#666">
          <circle cx="7.500" cy="4.500" r="3.500" strokeWidth="1.500" />
          <path d="M5 7L.8 11.200" strokeWidth="2" />
        </svg>
      </div>
    </div>
  );
}

function NavPane() {
  const f = <Folder16 />;
  const pale = <Folder16 pale />;
  const rows: { pad: string; icon: ReactNode; text: string; w: number; selected?: boolean }[] = [
    {
      pad: "pl-[40px]",
      icon: (
        <svg viewBox="0 0 16 16" className="size-4">
          <path d="M7.500 .5V12 M7.500 1 Q8 4 11 5.500 Q13 7 11.500 10" fill="none" stroke="#1b91e0" strokeWidth="2" />
          <ellipse cx="5.500" cy="12.500" rx="3" ry="2.600" fill="#1b91e0" />
        </svg>
      ),
      text: "Music",
      w: 32,
    },
    {
      pad: "pl-[40px]",
      icon: (
        <svg viewBox="0 0 16 16" className="size-4">
          <rect x=".5" y="2.500" width="15" height="11" fill="#fff" stroke="#8b9aa6" />
          <Landscape x={2} y={4} w={12} h={8} />
        </svg>
      ),
      text: "Pictures",
      w: 42,
    },
    {
      pad: "pl-[40px]",
      icon: (
        <svg viewBox="0 0 16 16" className="size-4">
          <rect x="1" y=".5" width="14" height="15" fill="#3b3f45" />
          <rect x="4" y="1.500" width="8" height="6" fill="#8d8566" />
          <rect x="4" y="8.500" width="8" height="6" fill="#4d8fd0" />
          <path d="M2.500 1V15 M13.500 1V15" stroke="#e7e7e7" strokeDasharray="1.500 1.500" />
        </svg>
      ),
      text: "Videos",
      w: 35,
    },
    {
      pad: "pl-[40px]",
      icon: (
        <svg viewBox="0 0 16 16" className="size-4">
          <path d="M0 2h2.500v2.500H0z M3.300 2h2.500v2.500H3.300z M0 5.300h2.500v2.500H0z M3.300 5.300h2.500v2.500H3.300z" fill="#1fb3e6" />
          <path d="M3 9H13L15.500 11.500H2Z" fill="#b9bdc0" />
          <rect x="1.500" y="11" width="14" height="3.500" fill="#4b5054" />
          <rect x="12.500" y="12" width="1.500" height="1.200" fill="#5ee06a" />
        </svg>
      ),
      text: "Local Disk (C:)",
      w: 75,
    },
    { pad: "pl-[48px]", icon: pale, text: "$WinREAgent", w: 72 },
    { pad: "pl-[48px]", icon: f, text: "PerfLogs", w: 46 },
    { pad: "pl-[48px]", icon: f, text: "Program Files", w: 72 },
    { pad: "pl-[48px]", icon: f, text: "Program Files (x86)", w: 104 },
    { pad: "pl-[48px]", icon: pale, text: "ProgramData", w: 70 },
    { pad: "pl-[48px]", icon: f, text: "Users", w: 28 },
    { pad: "pl-[56px]", icon: f, text: "admin", w: 34 },
    { pad: "pl-[64px]", icon: f, text: ".ms-ad", w: 37 },
    {
      pad: "pl-[64px]",
      icon: (
        <svg viewBox="0 0 16 16" className="size-4">
          <path d="M0 3L8 0.500L16 3V12L8 15.500L0 12Z" fill="#2fb6d3" />
          <path d="M0 3L8 5.500L16 3L8 .5Z" fill="#9fe6f2" />
          <path d="M8 5.500L16 3V12L8 15.500Z" fill="#158aa8" />
        </svg>
      ),
      text: "3D Objects",
      w: 57,
    },
    { pad: "pl-[64px]", icon: pale, text: "AppData", w: 46 },
    {
      pad: "pl-[64px]",
      icon: (
        <svg viewBox="0 0 16 16" className="size-4">
          <rect x=".5" y="3" width="15" height="10.500" fill="#d9eefb" stroke="#5a9cc4" />
          <rect x="2" y="5" width="5.500" height="7" fill="#fff" />
          <circle cx="4.800" cy="7" r="1.400" fill="#345" />
          <path d="M2.500 11.500Q4.800 7 7 11.500Z" fill="#1b5f96" />
          <path d="M9 6.500H14 M9 9H14" stroke="#2b7cb8" />
        </svg>
      ),
      text: "Contacts",
      w: 47,
    },
    { pad: "pl-[64px]", icon: <Monitor className="h-3 w-4" />, text: "Desktop", w: 43, selected: true },
  ];
  return (
    <div className="flex w-[157px] shrink-0">
      <div className="w-[141px] overflow-hidden pl-px">
        {rows.map((r, i) => (
          <div key={r.text + i} className={`flex h-6 w-[139px] items-center overflow-hidden ${r.pad} ${r.selected ? "bg-[#d9d9d9]" : ""}`}>
            <span className="flex w-4 shrink-0 justify-center">{r.icon}</span>
            <T w={r.w} className="ml-[5px]">{r.text}</T>
          </div>
        ))}
      </div>
      <div className="flex w-4 flex-col bg-[#f0f0f0]">
        <svg viewBox="0 0 16 17" className="h-[17px] w-4" fill="none" stroke="#505050" strokeWidth="1.800">
          <path d="M4.500 11L8 7.500L11.500 11" />
        </svg>
        <div className="mt-[130px] h-[70px] w-[15px] bg-[#cdcdcd]" />
        <svg viewBox="0 0 16 17" className="mt-auto h-[17px] w-4" fill="none" stroke="#505050" strokeWidth="1.800">
          <path d="M4.500 7L8 10.500L11.500 7" />
        </svg>
      </div>
    </div>
  );
}

function FileGrid() {
  const b = "size-24 mr-px";
  const img = <ImageDoc className={b} />;
  const word = <WordDoc className={b} />;
  const files: { icon: ReactNode; lines: Line[]; selected?: boolean }[] = [
    { icon: <BigFolder className={b} />, lines: [["USB 2.0 TO RS232", 90], ["Cable", 30]] },
    { icon: <BigFolder className={b} />, lines: [["UT-810 USB 1.1", 79], ["TO RS232 Cable", 81]] },
    { icon: img, lines: [["activitiessports.jp", 91], ["g", 7]] },
    { icon: word, lines: [["answersvol.rtf", 73]] },
    { icon: img, lines: [["featureorganizati", 89], ["ons.png", 43]] },
    { icon: img, lines: [["groupstell.jpg", 73]] },
    { icon: img, lines: [["havingunder.png", 91]] },
    { icon: word, lines: [["hostcut.rtf", 55]] },
    { icon: word, lines: [["legalpapers.rtf", 75]] },
    { icon: img, lines: [["necessarycapital.", 89], ["png", 21]] },
    { icon: <Edge className={b} />, lines: [["Readme-说明.", 76], ["htm", 22]] },
    { icon: img, lines: [["serviceuniversity.", 90], ["jpg", 17]] },
    {
      icon: (
        <div className="mr-px flex size-24 items-center justify-center border border-[#a3cdee]">
          <ZipFile className="size-[50px]" />
        </div>
      ),
      lines: [["usb15033.zip", 67]],
      selected: true,
    },
    { icon: img, lines: [["vegashead.png", 80]] },
  ];
  return (
    <div className="grid flex-1 auto-rows-[132px] grid-cols-[repeat(8,105px)] items-start gap-x-[13px] pl-[18px] pt-[6px]">
      {files.map((f) => (
        <div key={f.lines[0][0]} className={`flex flex-col items-center border pt-px ${f.selected ? "h-[116px] border-[#99d1ff] bg-[#cce8ff]" : "border-transparent"}`}>
          {f.icon}
          <div className="flex flex-col items-center leading-[15px]">
            {f.lines.map(([t, w]) => (
              <T key={t} w={w}>
                {t}
              </T>
            ))}
          </div>
        </div>
      ))}
    </div>
  );
}

function ExplorerWindow() {
  return (
    <section className="absolute left-[179px] top-[93px] flex h-[593px] w-[1125px] flex-col bg-white">
      <TitleArea />
      <div className="shrink-0 border-t border-[#dcdfe1]">
        <Ribbon />
      </div>
      <AddressRow />
      <div className="flex h-[386px] shrink-0">
        <NavPane />
        <FileGrid />
      </div>
      <footer className="flex flex-1 items-center pl-[15px] pr-[5px] text-[#26365c]">
        <T w={44}>14 items</T>
        <span className="ml-2 mr-3 h-4 w-px bg-[#ececec]" />
        <T w={79}>1 item selected</T>
        <T w={42} className="ml-[6px]">6.68 MB</T>
        <svg viewBox="0 0 42 22" className="ml-auto h-[22px] w-[42px]" fill="none">
          <path d="M1.500 5.500h3v3h-3z M1.500 13.500h3v3h-3z" stroke="#777" />
          <path d="M7 6.500h4M13 6.500h4M7 11h4M13 11h4M7 15.500h4M13 15.500h4M2 11h3" stroke="#777" />
          <rect x="20.500" y=".5" width="21" height="21" fill="#b9e6fb" stroke="#2a8dd4" />
          <rect x="25.500" y="6.500" width="12" height="10" fill="#fff" stroke="#666" />
          <path d="M27 15V12l3-2 3 2 3-1v4z" fill="#6a87a0" />
        </svg>
      </footer>
    </section>
  );
}

/* ---------- watermark and taskbar ---------- */

function Watermark() {
  return (
    <svg viewBox="0 0 200 70" className="absolute left-[1115px] top-[653px] h-[70px] w-[200px] opacity-60" fill="#cfd5df" fontFamily="Roboto, sans-serif" fontSize="51">
      <g stroke="#cfd5df" strokeWidth="1.600">
        <text x="5" y="54" textLength="58" lengthAdjust="spacingAndGlyphs">ANY</text>
        <text x="137" y="54" textLength="58" lengthAdjust="spacingAndGlyphs">RUN</text>
      </g>
      <g fill="none" stroke="#cfd5df" strokeWidth="5.500" strokeLinejoin="round" strokeLinecap="round">
        <path d="M84 12L78 16V58L116 38" />
        <path d="M88 45V7L126 40L88 62" />
      </g>
    </svg>
  );
}

function Taskbar() {
  return (
    <footer className="flex h-10 items-center bg-gradient-to-r from-[#001a26] via-[#001320] to-[#020a1e]">
      <div className="flex w-12 justify-center">
        <svg viewBox="0 0 16 16" className="size-4" fill="#fff">
          <path d="M0 2.200L6.700 1.300V7.500H0Z M7.500 1.200L16 0V7.500H7.500Z M0 8.300H6.700V14.600L0 13.700Z M7.500 8.300H16V16L7.500 14.800Z" />
        </svg>
      </div>
      <div className="flex h-full w-[288px] items-center border-y border-[#d8d8d8] bg-[#f2f2f2] pl-3 text-[15px] text-[#3c3c3c]">
        <svg viewBox="0 0 17 17" className="size-[17px]" fill="none" stroke="#222" strokeWidth="1.400">
          <circle cx="10.500" cy="6.500" r="5.500" />
          <path d="M6.500 10.500L.7 16.300" />
        </svg>
        <T w={128} className="ml-[11px]">Type here to search</T>
        <svg viewBox="0 0 68 34" className="ml-auto mr-[5px] h-[34px] w-[68px]">
          <path d="M1 11L11 15L22 10V25L11 30L1 26Z" fill="#167d6c" />
          <path d="M1 15L11 22L22 14 M1 20L11 27L22 19" fill="none" stroke="#d9f5ec" strokeWidth="1.800" />
          <path d="M2 10Q3 3 11 9Q18 2 21 9L11 14Z" fill="#df3a32" />
          <path d="M8 7L11 4L13 8" fill="#f4c96a" />
          <path d="M24 10H50V30L40 32L25 30Z" fill="#d8342a" />
          <path d="M34 10H40V32H34Z M24 9H50V13H24Z" fill="#f3ae4c" />
          <path d="M37 10Q26 8 28 2Q34 0 37 9Q41 0 47 2Q48 8 37 10Z" fill="#e79a3a" />
          <path d="M52 18H66V28L60 30L52 27Z" fill="#8ba3d8" />
          <path d="M58 17H61V30H58Z M51 15L60 11L68 16L60 20Z" fill="#cf3b4c" />
          <path d="M59 13Q53 14 55 9Q59 9 59 13Q64 7 65 12Q64 15 59 13Z" fill="#e05263" />
        </svg>
      </div>
      <div className="flex w-[50px] justify-center">
        <svg viewBox="0 0 18 16" className="mr-[2px] h-4 w-[18px]" fill="none" stroke="#f2f2f2" strokeWidth="1.200">
          <path d="M1.500 0V3.500H11.500V0 M1.500 16V12.500H11.500V16 M1.500 5H11.500V11H1.500Z M15.500 0V3.500 M15.500 9.500V16" />
          <path d="M14 5h3v3h-3z" fill="#f2f2f2" stroke="none" />
        </svg>
      </div>
      <div className="flex w-[50px] justify-center">
        <Edge className="size-6" />
      </div>
      <div className="flex h-full w-12 items-center justify-center border-b-2 border-[#76b9ed] bg-[#2f434d]">
        <svg viewBox="0 0 24 20" className="h-5 w-6">
          <path d="M1 1H9L11 3H23V6H1Z" fill="#e09b1d" />
          <path d="M1 4H23V18H1Z" fill="#fbd55f" />
          <path d="M5 19V12Q5 10 7 10H17Q19 10 19 12V19H15V14H9V19Z" fill="#3b94d6" />
        </svg>
      </div>
      <div className="flex w-[50px] justify-center">
        <Firefox className="size-6" />
      </div>
      <div className="ml-1 flex h-full w-10 items-center justify-center border-b-2 border-[#76b9ed]">
        <WinRar className="size-6" />
      </div>
      <div className="ml-auto flex items-center text-white">
        <svg viewBox="0 0 88 16" className="h-4 w-[88px]" fill="none" stroke="#fff" strokeWidth="1.200">
          <path d="M1 11L6.500 5.500L12 11" strokeWidth="1.400" />
          <path d="M26.500 4.500H33.500V11.500H26.500Z M34 7L36.500 5V11L34 9 M27 1.500Q30 -.5 33 1.500 M27 14.500Q30 16.500 33 14.500" />
          <path d="M46.500 6H48.500L52 2.500V13.500L48.500 10H46.500Z M54.500 5.500Q56.500 8 54.500 10.500 M57 3.500Q60 8 57 12.500 M59.500 1.500Q63.500 8 59.500 14.500" />
          <path d="M77 3.500H86.500V11.500H74V7 M79 14.500H84 M81 11.500V14.500 M71 1.500H75.500V6H71Z M73.300 6V15" />
        </svg>
        <div className="ml-[4px] flex w-[60px] flex-col items-center leading-[18px]">
          <T w={43}>4:29 AM</T>
          <T w={47}>2/3/2026</T>
        </div>
        <svg viewBox="0 0 18 18" className="ml-[14px] h-[18px] w-[18px]" fill="none" stroke="#fff" strokeWidth="1.200">
          <path d="M1.500 1.500H16.500V13.500H11.500L8.500 16.500L5.500 13.500H1.500Z" />
        </svg>
        <span className="ml-[19px] mr-1 h-10 w-px bg-[#4b5563]" />
      </div>
    </footer>
  );
}

export default function App() {
  return (
    <main className="relative h-[768px] w-[1360px] overflow-hidden bg-[linear-gradient(to_bottom,rgba(0,90,190,0.16),rgba(0,90,190,0)_30%),linear-gradient(97deg,#00abfc_0%,#00b2ff_34%,#00a2f2_44%,#0380e2_58%,#0a62d2_72%,#0848c0_86%,#053cb4_100%)] font-['Open_Sans','Noto_Sans_CJK_SC',sans-serif] text-[12px] text-black">
      <Desktop />
      <ArchiveWindow />
      <ExplorerWindow />
      <Watermark />
      <Taskbar />
    </main>
  );
}
